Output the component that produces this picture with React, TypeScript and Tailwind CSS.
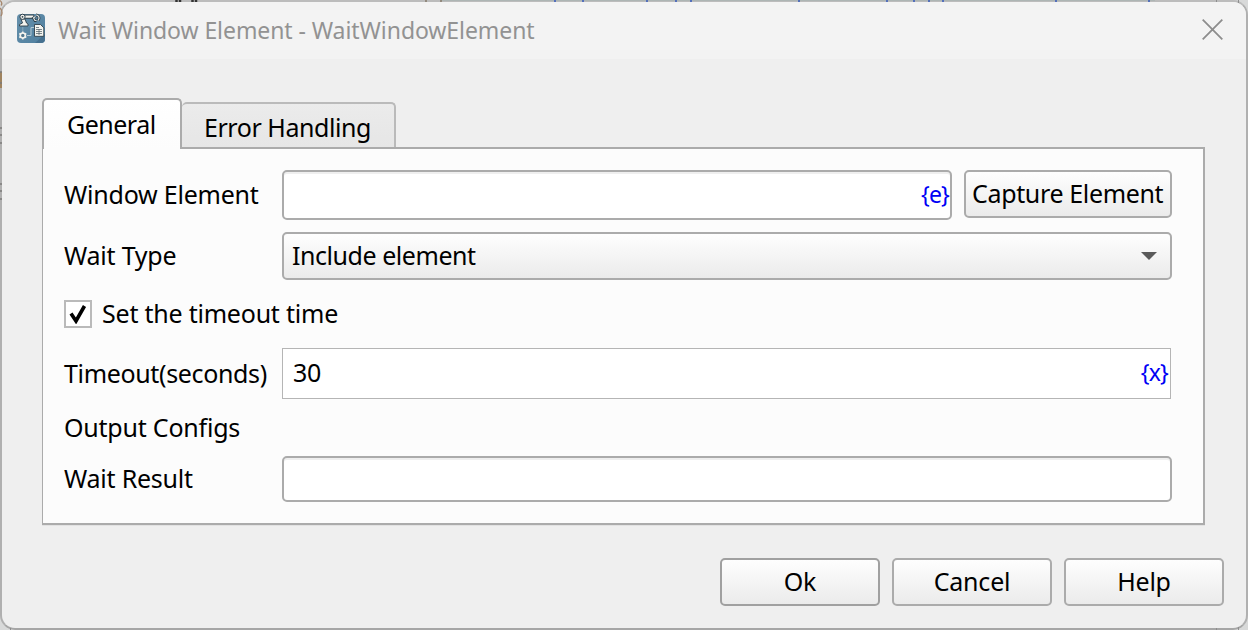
import type { ReactNode } from "react";

function AppIcon() {
  return (
    <svg width="28" height="29" viewBox="0 0 28 29" className="-mt-0.5 shrink-0 overflow-visible">
      <defs>
        <linearGradient id="appBg" x1="0" y1="0" x2="1" y2="1">
          <stop offset="0" stopColor="#6690ab" />
          <stop offset="1" stopColor="#4f7f9f" />
        </linearGradient>
      </defs>
      <rect width="28" height="29" rx="4" fill="url(#appBg)" />
      <path d="M18 29 L28 20 V25 A4 4 0 0 1 24 29 Z" fill="#45708f" />
      <path d="M7 2.600 H17" stroke="#2f404b" strokeWidth="4.400" />
      <path d="M7.500 2.600 H16.500" stroke="#f4f4ef" strokeWidth="2.200" />
      <path d="M4 5 L8 5 L9.500 9 L11 10 V12 H2.500 V10.500 L5.500 9 Z" fill="#f4f4ef" stroke="#2f404b" strokeWidth="0.900" />
      <circle cx="5.500" cy="2.800" r="2.600" fill="#f4f4ef" stroke="#2f404b" strokeWidth="1" />
      <circle cx="5.500" cy="2.800" r="0.900" fill="#2f404b" />
      <path d="M19 1 A3 3 0 0 1 22 4.500 L21 6.500 M18.500 2.500 L16.500 4 L18 6.500 L19.500 6.500" fill="none" stroke="#2f404b" strokeWidth="2.800" />
      <path d="M19 1 A3 3 0 0 1 22 4.500 L21 6.500 M18.500 2.500 L16.500 4 L18 6.500 L19.500 6.500" fill="none" stroke="#dce2e2" strokeWidth="1.200" />
      <path d="M10 21.500 H14 V13.500 H17" fill="none" stroke="#b4cad6" strokeWidth="1" />
      <path d="M5.800 13 V17.500" stroke="#87a9bd" strokeWidth="1" />
      <circle cx="5.800" cy="21.500" r="2.500" fill="#54798f" stroke="#f4f4ef" strokeWidth="1.600" />
      <path d="M5.800 17.500v1.700 M5.800 23.800v1.700 M2.300 19.500l1.400.8 M7.900 22.700l1.400.8 M2.300 23.500l1.400-.8 M7.900 20.300l1.400-.8" stroke="#f4f4ef" strokeWidth="1.500" />
      <path d="M17.500 10.500 H23.500 L26.800 13.800 V22.300 H17.500 Z" fill="#f4f4ef" stroke="#2f404b" strokeWidth="0.900" />
      <path d="M19 13.500h3 M19 15.500h6 M19 17.500h6 M19 19.500h6 M22 15v6" stroke="#5c6b73" strokeWidth="0.800" />
    </svg>
  );
}

/* Slivers of the editor window that show around the dialog's edge. */
function EditorEdge() {
  return (
    <svg width="1248" height="630" viewBox="0 0 1248 630" className="pointer-events-none absolute inset-0">
      <path d="M441 0.500 H1155" stroke="#adb5b4" />
      <path d="M176.500 0v2 M180 0v2 M192.500 0v2 M196 0v2" stroke="#333333" strokeWidth="2.500" />
      <path d="M426 0v2 M441 0v2" stroke="#857969" strokeWidth="1.500" />
      <path d="M555 0v2 M583 0v2 M647 0v2 M676 0v2 M691 0v2 M799 0v2 M887 0v2 M914 0v2 M929 0v2 M943 0v2 M1056 0v2 M1149 0v2" stroke="#5470bb" strokeWidth="2" />
      <path d="M0 0.500 Q3 3 1 5.500 M0 8 Q3.500 12 1 16" fill="none" stroke="#a5866c" strokeWidth="1.300" />
      <path d="M1 72v16" stroke="#9f835f" strokeWidth="2" />
      <path d="M0 72h2 M0 83h2 M0 128h2 M0 135h2 M0 143h2 M0 184h2 M0 191h2 M0 199h2" stroke="#7c7b79" strokeWidth="1.500" />
      <path d="M10.500 628v2 M1216.500 0v2 M1238.500 0v3 M1216.500 628v2 M1238.500 627v3" stroke="#8e8e8e" />
    </svg>
  );
}

function Label({ children, className = "" }: { children: ReactNode; className?: string }) {
  return <span className={`block w-[218px] shrink-0 whitespace-nowrap ${className}`}>{children}</span>;
}

function PushButton({ children, className }: { children: ReactNode; className: string }) {
  return (
    <button
      className={`flex h-12 shrink-0 items-center rounded-[5px] border-2 bg-linear-to-b from-[#fefefe] to-[#ebebeb] pb-0.5 whitespace-nowrap ${className}`}
    >
      {children}
    </button>
  );
}

export default function App() {
  return (
    <div className="relative h-[630px] w-[1248px] overflow-hidden bg-[#d8d9d9] font-['Noto_Sans','Open_Sans',sans-serif] text-[25px] leading-[34px] tracking-[-0.22px] text-black">
      <div className="flex h-full flex-col overflow-hidden rounded-[15px] border-2 border-[#b0b0b0] border-t-[#bcbcbc] border-b-[#a6a6a6] bg-[#efefef]">
        <header className="flex h-[57px] shrink-0 items-center bg-[#f3f3f3] pr-[23px] pb-0.5 pl-[15px]">
          <AppIcon />
          <h1 className="ml-[13px] text-[23px] tracking-[-0.07px] whitespace-nowrap text-[#929292]">
            Wait Window Element - WaitWindowElement
          </h1>
          <svg width="21" height="21" viewBox="0 0 21 21" className="-mt-px ml-auto">
            <path d="M0.700 0.700 L20.300 20.300 M20.300 0.700 L0.700 20.300" stroke="#8d8d8d" strokeWidth="1.800" />
          </svg>
        </header>

        <main className="px-10 pt-[39px]">
          <div className="relative z-10 flex items-end">
            <div className="-mb-0.5 flex h-[51px] w-[140px] items-center rounded-t-[5px] border-2 border-b-0 border-[#ababab] bg-linear-to-b from-white to-[#fcfcfc] pb-0.5 pl-[23px] tracking-[-0.5px]">
              General
            </div>
            <div className="flex h-[45px] w-[214px] items-center rounded-t-[5px] border-2 border-b-0 border-l-0 border-[#bababa] bg-linear-to-b from-[#ebebeb] to-[#e6e6e6] pt-0.5 pl-[22px] tracking-[-0.45px]">
              Error Handling
            </div>
          </div>

          <section className="flex h-[378px] w-[1163px] flex-col border-2 border-l border-[#ababab] bg-[#fcfcfc] pt-[21px] pl-[21px] shadow-[0_1px_0_#e2e2e2]">
            <div className="flex items-start">
              <Label className="pt-[7px]">Window Element</Label>
              <div className="flex h-[50px] w-[670px] items-center justify-end rounded-[5px] border-2 border-[#ababab] bg-white pr-px pb-0.5 text-[23px] tracking-[-0.8px] text-[#0000f5] shadow-[inset_0_2px_0_#efefef]">
                {"{e}"}
              </div>
              <PushButton className="ml-3 w-[208px] border-[#ababab] pl-1.5 tracking-[-0.35px]">Capture Element</PushButton>
            </div>
            <div className="mt-3 flex items-center">
              <Label className="pb-0.5">Wait Type</Label>
              <PushButton className="w-[890px] justify-between border-[#ababab] pr-[13px] pl-2 tracking-[-0.45px]">
                <span>Include element</span>
                <svg width="16" height="8" viewBox="0 0 16 8" className="mt-0.5">
                  <path d="M0 0 H16 L8 8 Z" fill="#5a5a5a" />
                </svg>
              </PushButton>
            </div>
            <div className="mt-5 flex h-7 items-center">
              <span className="flex size-7 items-center justify-center border-2 border-[#bababa] bg-white">
                <svg width="18" height="20" viewBox="0 0 18 20">
                  <path d="M2 9.500 L7 17 L15.500 2" fill="none" stroke="#000" strokeWidth="3.600" />
                </svg>
              </span>
              <span className="ml-2.5 pb-0.5 whitespace-nowrap">Set the timeout time</span>
            </div>
            <div className="mt-5 flex items-center">
              <Label className="pb-0.5 tracking-[-0.35px]">Timeout(seconds)</Label>
              <div className="flex h-[51px] w-[889px] items-center justify-between border border-[#b5b5b5] bg-white pr-0.5 pb-[3px] pl-2.5 tracking-[-0.4px]">
                <span>30</span>
                <span className="text-[23px] tracking-[-0.8px] text-[#0000f5]">{"{x}"}</span>
              </div>
            </div>
            <div className="mt-[11px] flex h-[34px] items-center">
              <Label>Output Configs</Label>
            </div>
            <div className="mt-3 flex items-center">
              <Label className="pb-0.5">Wait Result</Label>
              <div className="h-[46px] w-[890px] rounded-[5px] border-2 border-[#ababab] bg-white shadow-[inset_0_2px_0_#efefef]" />
            </div>
          </section>
        </main>

        <footer className="mt-[33px] flex justify-end gap-3 pr-[22px]">
          <PushButton className="w-40 justify-center border-[#a0a0a0]">Ok</PushButton>
          <PushButton className="w-40 justify-center border-[#ababab]">Cancel</PushButton>
          <PushButton className="w-40 justify-center border-[#ababab]">Help</PushButton>
        </footer>
      </div>
      <EditorEdge />
    </div>
  );
}
